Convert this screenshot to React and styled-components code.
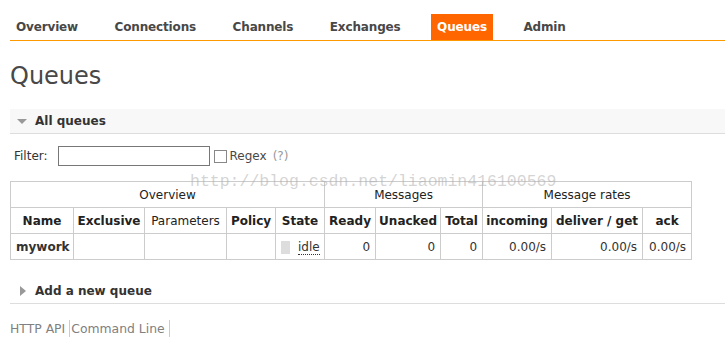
import React from 'react';
import styled, { createGlobalStyle } from 'styled-components';

const GlobalStyle = createGlobalStyle`
  html, body {
    margin: 0;
    padding: 0;
    background: #fff;
  }
  body {
    font-family: "DejaVu Sans", Verdana, sans-serif;
    font-size: 12px;
    color: #484848;
  }
`;

const Page = styled.div`
  padding: 0 0 0 10px;
`;

const Nav = styled.ul`
  display: flex;
  gap: 24.5px;
  list-style: none;
  margin: 14px 0 0;
  padding: 0;
  border-bottom: 1px solid #f90;
`;

const NavItem = styled.li`
  height: 26px;
  line-height: 26px;
  padding: 0 6px;
  font-weight: bold;
  font-size: 12px;
  letter-spacing: -0.15px;
  color: ${(p) => (p.$active ? '#fff' : '#484848')};
  background: ${(p) => (p.$active ? '#f60' : 'transparent')};
`;

const Title = styled.h1`
  margin: 23px 0 0;
  font-size: 24px;
  line-height: 24px;
  font-weight: normal;
  color: #484848;
`;

const SectionHeader = styled.div`
  display: flex;
  align-items: center;
  gap: 8px;
  height: 24px;
  margin-top: ${(p) => p.$top}px;
  padding-left: 7px;
  background: ${(p) => (p.$shaded ? '#f8f8f8' : 'transparent')};
  border-bottom: 1px solid #ddd;
  font-weight: bold;
  font-size: 12px;
  color: #333;
`;

const Triangle = styled.span`
  width: 0;
  height: 0;
  ${(p) =>
    p.$open
      ? `
    border-left: 5px solid transparent;
    border-right: 5px solid transparent;
    border-top: 5px solid #999;
    margin-left: 0;
  `
      : `
    border-top: 5px solid transparent;
    border-bottom: 5px solid transparent;
    border-left: 6px solid #999;
    margin-left: 3px;
    margin-right: 1px;
  `}
`;

const FilterRow = styled.div`
  display: flex;
  align-items: center;
  margin-top: 12px;
  padding-left: 4px;
  height: 20px;
`;

const Label = styled.span`
  margin-right: 10px;
  color: #333;
`;

const TextInput = styled.input`
  box-sizing: border-box;
  width: 152px;
  height: 20px;
  border: 1px solid #777;
  margin: 0;
  padding: 0 2px;
`;

const Check = styled.span`
  display: inline-block;
  box-sizing: border-box;
  width: 13px;
  height: 13px;
  border: 1px solid #888;
  margin: 0 3px 0 4px;
`;

const Help = styled.span`
  color: #999;
  margin-left: 6px;
`;

const TableWrap = styled.div`
  position: relative;
  margin-top: 15px;
`;

const Watermark = styled.div`
  position: absolute;
  left: 180px;
  top: -9px;
  font-family: "Liberation Mono", "DejaVu Sans Mono", monospace;
  font-size: 16.5px;
  color: rgba(170, 170, 170, 0.5);
  pointer-events: none;
  white-space: nowrap;
`;

const Table = styled.table`
  border-collapse: collapse;
  table-layout: fixed;
  width: 681px;
`;

const Cell = styled.td`
  border: 1px solid #ccc;
  height: 25px;
  padding: 0 5px;
  font-size: 12px;
  white-space: nowrap;
  text-align: ${(p) => p.$align || 'right'};
  font-weight: ${(p) => (p.$bold ? 'bold' : 'normal')};
  color: #333;
`;

const Head = styled.th`
  border: 1px solid #ccc;
  height: 25px;
  padding: 0 3px;
  font-size: 12px;
  white-space: nowrap;
  text-align: center;
  font-weight: ${(p) => (p.$light ? 'normal' : 'bold')};
  color: #222;
`;

const StateBox = styled.span`
  display: inline-block;
  width: 9px;
  height: 13px;
  background: #ddd;
  vertical-align: middle;
  margin-right: 8px;
`;

const Abbr = styled.span`
  border-bottom: 1px dotted #333;
`;

const Footer = styled.div`
  display: flex;
  margin-top: 16px;
  color: #808080;
  font-size: 12.4px;
`;

const FooterLink = styled.span`
  padding-right: 4px;
  margin-right: 1px;
  border-right: 1px solid #ccc;
  line-height: 17px;
`;

const widths = [63, 71, 82, 49, 49, 51, 65, 42, 69, 91, 49];
const navItems = ['Overview', 'Connections', 'Channels', 'Exchanges', 'Queues', 'Admin'];

export default function App() {
  return (
    <Page>
      <GlobalStyle />
      <Nav>
        {navItems.map((n) => (
          <NavItem key={n} $active={n === 'Queues'}>
            {n}
          </NavItem>
        ))}
      </Nav>
      <Title>Queues</Title>
      <SectionHeader $top={21} $shaded>
        <Triangle $open />
        All queues
      </SectionHeader>
      <FilterRow>
        <Label>Filter:</Label>
        <TextInput type="text" />
        <Check />
        <span>Regex</span>
        <Help>(?)</Help>
      </FilterRow>
      <TableWrap>
        <Table>
          <colgroup>
            {widths.map((w, i) => (
              <col key={i} style={{ width: w }} />
            ))}
          </colgroup>
          <thead>
            <tr>
              <Head colSpan={5} $light>Overview</Head>
              <Head colSpan={3} $light>Messages</Head>
              <Head colSpan={3} $light>Message rates</Head>
            </tr>
            <tr>
              <Head>Name</Head>
              <Head>Exclusive</Head>
              <Head $light>Parameters</Head>
              <Head>Policy</Head>
              <Head>State</Head>
              <Head>Ready</Head>
              <Head>Unacked</Head>
              <Head>Total</Head>
              <Head>incoming</Head>
              <Head>deliver / get</Head>
              <Head>ack</Head>
            </tr>
          </thead>
          <tbody>
            <tr>
              <Cell $align="left" $bold>mywork</Cell>
              <Cell />
              <Cell />
              <Cell />
              <Cell $align="left">
                <StateBox />
                <Abbr>idle</Abbr>
              </Cell>
              <Cell>0</Cell>
              <Cell>0</Cell>
              <Cell>0</Cell>
              <Cell>0.00/s</Cell>
              <Cell>0.00/s</Cell>
              <Cell>0.00/s</Cell>
            </tr>
          </tbody>
        </Table>
        <Watermark>http://blog.csdn.net/liaomin416100569</Watermark>
      </TableWrap>
      <SectionHeader $top={19}>
        <Triangle />
        Add a new queue
      </SectionHeader>
      <Footer>
        <FooterLink>HTTP API</FooterLink>
        <FooterLink>Command Line</FooterLink>
      </Footer>
    </Page>
  );
}
